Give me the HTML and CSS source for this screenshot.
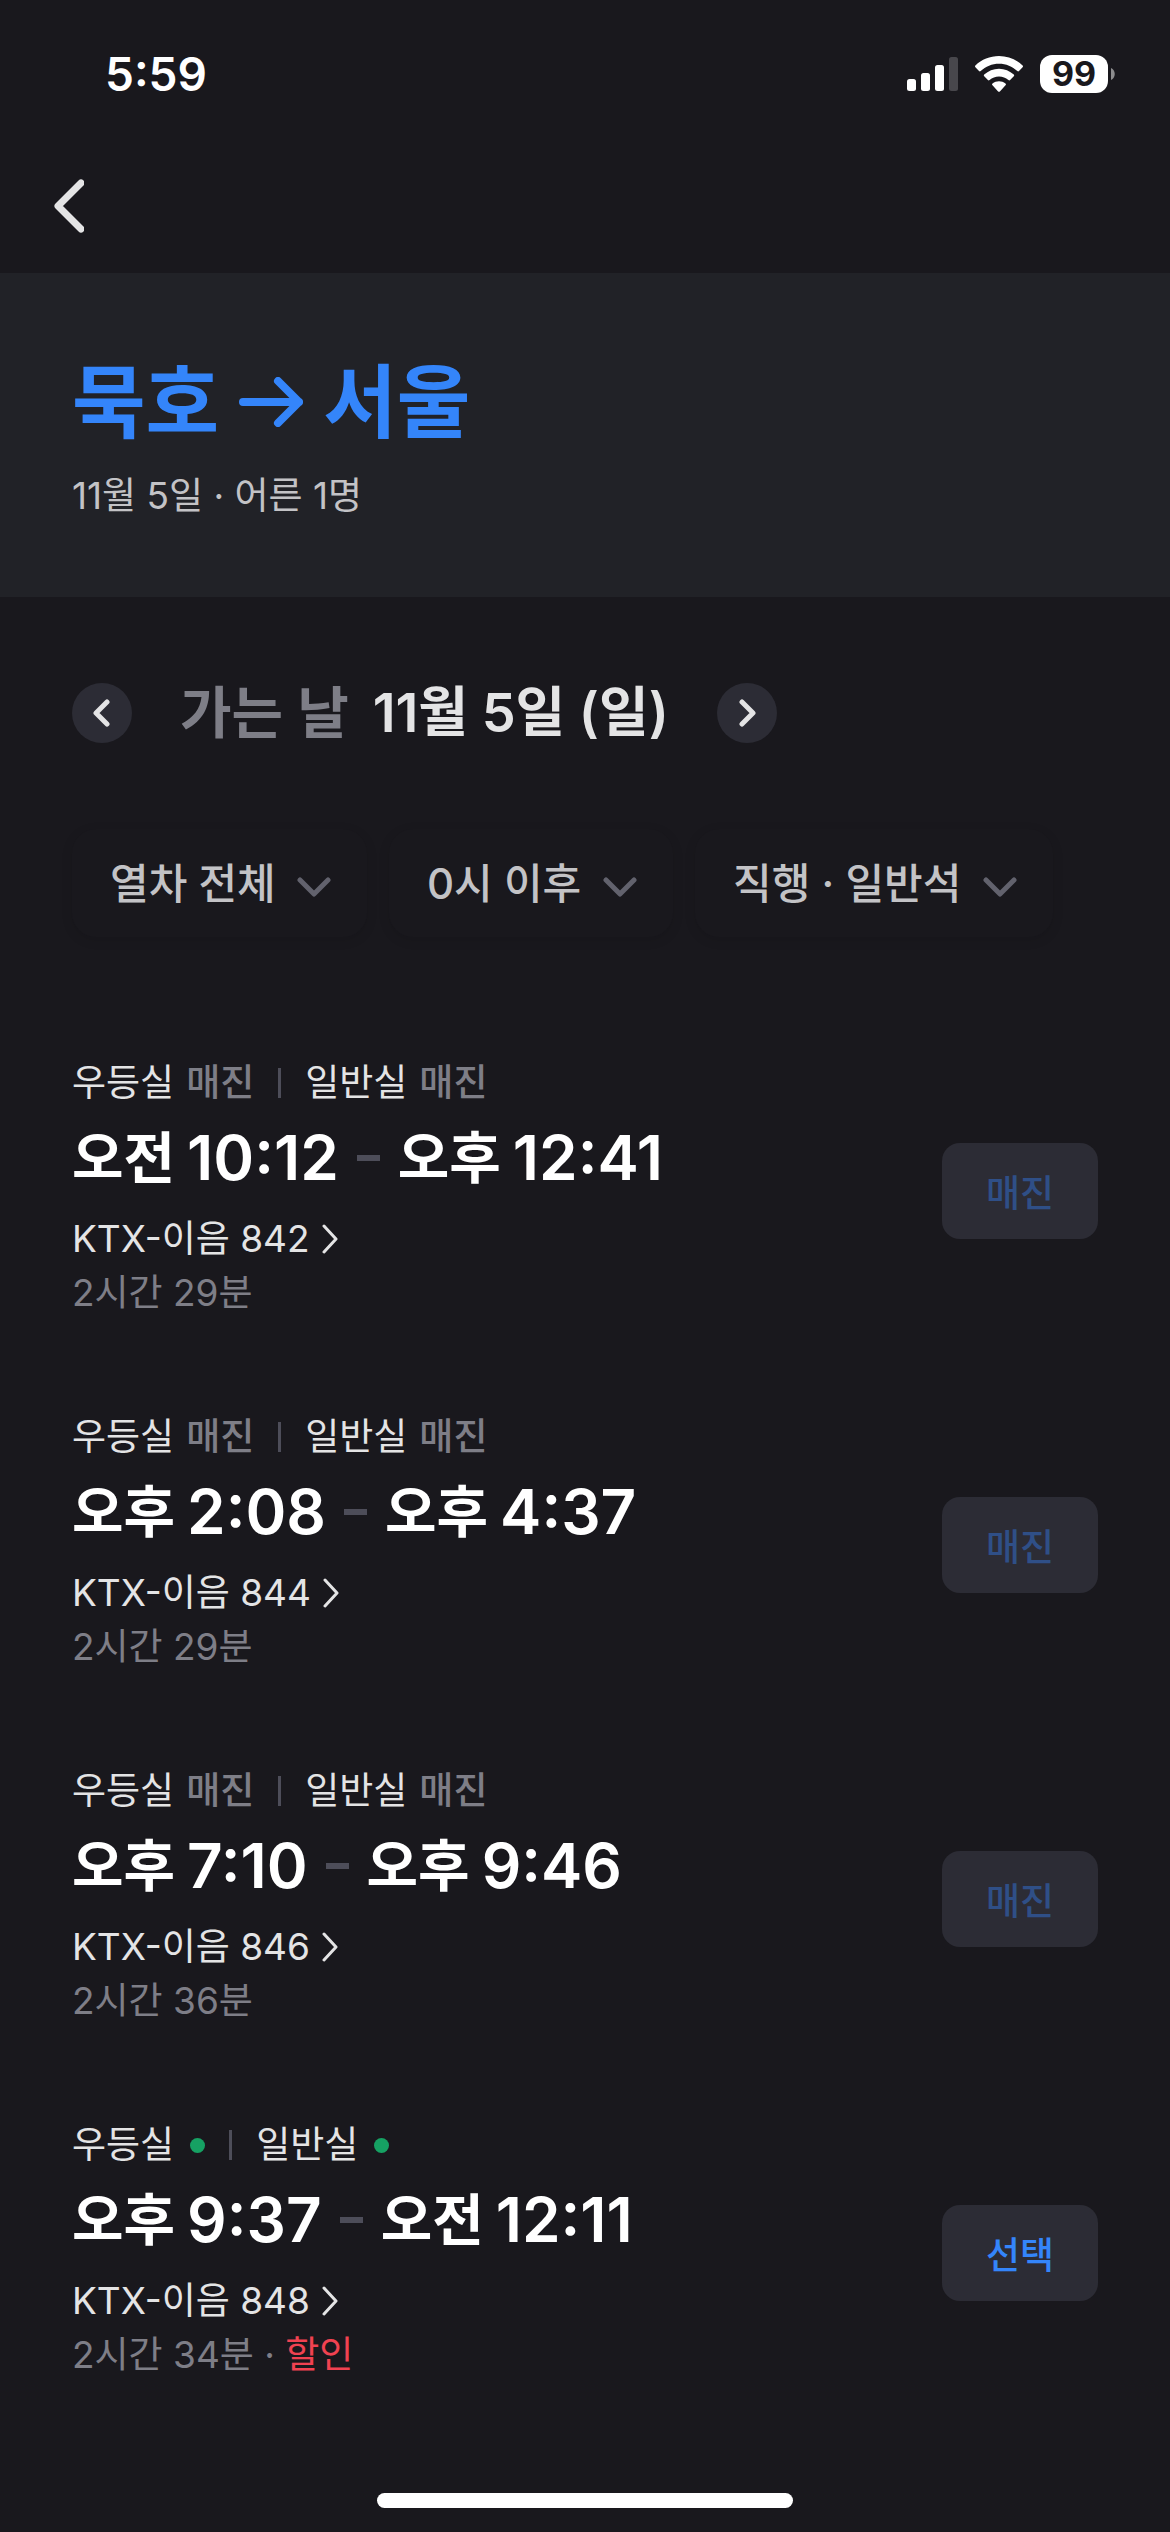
FILE: index.html
```html
<!DOCTYPE html>
<html lang="ko">
<head>
    <meta charset="UTF-8">
    <meta name="viewport" content="width=device-width, initial-scale=1.0">
    <title>묵호 → 서울</title>
    <link rel="stylesheet" href="styles.css">
</head>
<body>

<div class="status-bar">
    <span class="clock">5:59</span>
    <div class="status-icons">
        <svg class="signal" width="51" height="34" viewBox="0 0 51 34" fill="#fff">
            <rect x="0" y="22" width="9" height="12" rx="2.5"/>
            <rect x="14" y="16" width="9" height="18" rx="2.5"/>
            <rect x="28" y="8" width="9" height="26" rx="2.5"/>
            <rect x="42" y="0" width="9" height="34" rx="2.5" fill="#48474c"/>
        </svg>
        <svg class="wifi" width="48" height="36" viewBox="0 0 48 36" fill="#fff">
            <path d="M24 0C33 0 41.500 3.500 47.600 9.400Q48.500 10.300 47.600 11.200L44 15Q43.200 15.800 42.300 15C37.400 10.300 31 7.700 24 7.700S10.600 10.300 5.700 15Q4.800 15.800 4 15L.4 11.200Q-.5 10.300 .4 9.400C6.500 3.500 15 0 24 0Z"/>
            <path d="M24 12.700C29.600 12.700 34.800 14.900 38.800 18.500Q39.700 19.400 38.800 20.300L35.100 24Q34.300 24.800 33.400 24C30.800 21.700 27.600 20.400 24 20.400S17.200 21.700 14.600 24Q13.700 24.800 12.900 24L9.200 20.300Q8.300 19.400 9.200 18.500C13.200 14.900 18.400 12.700 24 12.700Z"/>
            <path d="M24 25.300C26.400 25.300 28.600 26.100 30.500 27.500Q31.400 28.400 30.500 29.300L24.900 35.400Q24 36.300 23.100 35.400L17.500 29.300Q16.600 28.400 17.500 27.500C19.400 26.100 21.600 25.300 24 25.300Z"/>
        </svg>
        <div class="battery">
            <span class="battery-level">99</span>
            <svg width="4" height="12" viewBox="0 0 4 12"><path d="M0 0C5 2 5 10 0 12Z" fill="#8c8c8e"/></svg>
        </div>
    </div>
</div>

<nav class="nav-bar">
    <button class="back-button" aria-label="뒤로">
        <svg width="30" height="54" viewBox="0 0 30 54"><path d="M27 4L4 27L27 50"/></svg>
    </button>
</nav>

<header class="route">
    <h1 class="route-title">
        <span>묵호</span>
        <svg width="64" height="50" viewBox="0 0 64 50"><path d="M4 25H60M39 4L60 25L39 46"/></svg>
        <span>서울</span>
    </h1>
    <p class="route-info">11월 5일 · 어른 1명</p>
</header>

<main>
    <div class="date-picker">
        <button class="date-button" aria-label="이전 날">
            <svg width="18" height="28" viewBox="0 0 18 28"><path d="M14 3L3 14L14 25"/></svg>
        </button>
        <h2 class="date-title"><span class="date-label">가는 날</span> <span>11월 5일 (일)</span></h2>
        <button class="date-button" aria-label="다음 날">
            <svg width="18" height="28" viewBox="0 0 18 28"><path d="M4 3L15 14L4 25"/></svg>
        </button>
    </div>

    <div class="filters">
        <div class="filter">
            <select class="filter-select" aria-label="열차 종류">
                <option>열차 전체</option>
                <option>KTX</option>
            </select>
            <svg class="filter-arrow" width="34" height="20" viewBox="0 0 34 20"><path d="M3 3L17 17L31 3"/></svg>
        </div>
        <div class="filter">
            <select class="filter-select" aria-label="출발 시간">
                <option>0시 이후</option>
                <option>6시 이후</option>
            </select>
            <svg class="filter-arrow" width="34" height="20" viewBox="0 0 34 20"><path d="M3 3L17 17L31 3"/></svg>
        </div>
        <div class="filter">
            <select class="filter-select" aria-label="경로와 좌석">
                <option>직행 · 일반석</option>
                <option>직행</option>
            </select>
            <svg class="filter-arrow" width="34" height="20" viewBox="0 0 34 20"><path d="M3 3L17 17L31 3"/></svg>
        </div>
    </div>

    <ul class="train-list">
        <li class="train">
            <div class="train-info">
                <div class="seats">
                    <span>우등실</span><span class="sold-out">매진</span>
                    <span class="divider"></span>
                    <span>일반실</span><span class="sold-out">매진</span>
                </div>
                <div class="times">오전 <b>10:12</b> <span class="dash"></span> 오후 <b>12:41</b></div>
                <a class="train-name" href="#">KTX-이음 842
                    <svg width="16" height="30" viewBox="0 0 16 30"><path d="M2 2L14 15L2 28"/></svg>
                </a>
                <div class="duration">2시간 29분</div>
            </div>
            <button class="select-button" disabled>매진</button>
        </li>
        <li class="train">
            <div class="train-info">
                <div class="seats">
                    <span>우등실</span><span class="sold-out">매진</span>
                    <span class="divider"></span>
                    <span>일반실</span><span class="sold-out">매진</span>
                </div>
                <div class="times">오후 <b>2:08</b> <span class="dash"></span> 오후 <b>4:37</b></div>
                <a class="train-name" href="#">KTX-이음 844
                    <svg width="16" height="30" viewBox="0 0 16 30"><path d="M2 2L14 15L2 28"/></svg>
                </a>
                <div class="duration">2시간 29분</div>
            </div>
            <button class="select-button" disabled>매진</button>
        </li>
        <li class="train">
            <div class="train-info">
                <div class="seats">
                    <span>우등실</span><span class="sold-out">매진</span>
                    <span class="divider"></span>
                    <span>일반실</span><span class="sold-out">매진</span>
                </div>
                <div class="times">오후 <b>7:10</b> <span class="dash"></span> 오후 <b>9:46</b></div>
                <a class="train-name" href="#">KTX-이음 846
                    <svg width="16" height="30" viewBox="0 0 16 30"><path d="M2 2L14 15L2 28"/></svg>
                </a>
                <div class="duration">2시간 36분</div>
            </div>
            <button class="select-button" disabled>매진</button>
        </li>
        <li class="train">
            <div class="train-info">
                <div class="seats">
                    <span>우등실</span><span class="available"></span>
                    <span class="divider"></span>
                    <span>일반실</span><span class="available"></span>
                </div>
                <div class="times">오후 <b>9:37</b> <span class="dash"></span> 오전 <b>12:11</b></div>
                <a class="train-name" href="#">KTX-이음 848
                    <svg width="16" height="30" viewBox="0 0 16 30"><path d="M2 2L14 15L2 28"/></svg>
                </a>
                <div class="duration">2시간 34분 · <span class="discount">할인</span></div>
            </div>
            <button class="select-button">선택</button>
        </li>
    </ul>
</main>

<footer class="home-indicator"><span></span></footer>

</body>
</html>
```
FILE: styles.css
```css
* {
    box-sizing: border-box;
}

body {
    margin: 0;
    min-height: 100vh;
    display: flex;
    flex-direction: column;
    background-color: #19181d;
    color: #e4e4e5;
    font-family: Inter, "Noto Sans CJK KR", sans-serif;
    font-size: 37px;
    line-height: 54px;
}

h1, h2, p, ul {
    margin: 0;
    padding: 0;
}

button, select {
    border: none;
    padding: 0;
    font-family: inherit;
    cursor: pointer;
}

svg {
    display: block;
    flex: none;
}

path {
    stroke-linecap: round;
    stroke-linejoin: round;
}

/* Status bar */
.status-bar {
    display: flex;
    justify-content: space-between;
    align-items: center;
    height: 148px;
    padding: 0 55px 0 105px;
}

.clock {
    color: #ffffff;
    font-size: 46px;
    font-weight: 600;
}

.status-icons, .battery {
    display: flex;
    align-items: center;
}

.status-icons {
    gap: 17px;
}

.battery {
    gap: 3px;
}

.battery-level {
    width: 68px;
    border-radius: 12px;
    background-color: #ffffff;
    color: #19181d;
    font-size: 34px;
    font-weight: 700;
    line-height: 38px;
    text-align: center;
}

/* Navigation */
.nav-bar {
    display: flex;
    align-items: center;
    height: 125px;
    padding: 0 54px 10px;
}

.back-button {
    background: none;
}

.back-button path {
    fill: none;
    stroke: #e4e4e5;
    stroke-width: 7;
}

/* Route */
.route {
    padding: 72px;
    background-color: #212227;
}

.route-title {
    display: flex;
    align-items: center;
    gap: 20px;
    color: #3485fa;
    font-size: 80px;
    font-weight: 700;
    line-height: 114px;
}

.route-title path {
    fill: none;
    stroke: #3485fa;
    stroke-width: 8;
}

.route-info {
    padding: 10px 0 2px;
    color: #c3c3c6;
}

/* Date */
.date-picker {
    display: flex;
    align-items: center;
    gap: 48px;
    padding: 80px 72px 0;
}

.date-button {
    display: flex;
    justify-content: center;
    align-items: center;
    width: 60px;
    height: 60px;
    border-radius: 50%;
    background-color: #2c2c35;
}

.date-button path {
    fill: none;
    stroke: #e4e4e5;
    stroke-width: 5;
}

.date-title {
    display: flex;
    gap: 24px;
    font-size: 54px;
    font-weight: 600;
    line-height: 72px;
}

.date-label {
    color: #7e7e87;
    font-size: 56px;
}

/* Filters */
.filters {
    display: flex;
    gap: 22px;
    padding: 80px 72px 77px;
}

.filter {
    position: relative;
    border-radius: 24px;
    box-shadow: 0 3px 12px rgba(0, 0, 0, 0.1);
}

.filter-select {
    appearance: none;
    height: 108px;
    padding: 0 91px 0 38px;
    border-radius: 24px;
    background-color: #19181d;
    color: #c3c3c6;
    font-size: 42px;
    font-weight: 500;
}

.filter-arrow {
    position: absolute;
    right: 36px;
    top: 48px;
    pointer-events: none;
}

.filter-arrow path {
    fill: none;
    stroke: #62626d;
    stroke-width: 5;
}

/* Train list */
.train-list {
    list-style: none;
}

.train {
    display: flex;
    justify-content: space-between;
    align-items: center;
    padding: 42px 72px;
}

.seats {
    display: flex;
    align-items: center;
    gap: 12px;
}

.sold-out {
    color: #7e7e87;
    font-weight: 500;
}

.divider {
    width: 3px;
    height: 30px;
    margin: 0 12px;
    background-color: #4d4d59;
}

.available {
    width: 15px;
    height: 15px;
    margin-left: 4px;
    border-radius: 50%;
    background-color: #16a163;
}

.times {
    display: flex;
    align-items: center;
    gap: 12px;
    padding-bottom: 6px;
    color: #ffffff;
    font-size: 56px;
    font-weight: 700;
    line-height: 96px;
}

.times b {
    font-size: 62px;
    font-weight: 600;
}

.dash {
    width: 23px;
    height: 6px;
    margin: 0 6px;
    background-color: #4d4d59;
}

.train-name {
    display: flex;
    align-items: center;
    gap: 12px;
    color: #e4e4e5;
    text-decoration: none;
}

.train-name path {
    fill: none;
    stroke: #e4e4e5;
    stroke-width: 3;
}

.duration {
    color: #7e7e87;
    padding-bottom: 6px;
}

.discount {
    color: #f04251;
}

.select-button {
    width: 156px;
    height: 96px;
    border-radius: 18px;
    background-color: #2c2c35;
    color: #3485fa;
    font-size: 37px;
    font-weight: 500;
}

.select-button:disabled {
    color: #2f4f87;
    cursor: default;
}

.home-indicator {
    display: flex;
    justify-content: center;
    margin-top: auto;
    padding-bottom: 24px;
}

.home-indicator span {
    width: 416px;
    height: 15px;
    border-radius: 8px;
    background-color: #ffffff;
}
```
